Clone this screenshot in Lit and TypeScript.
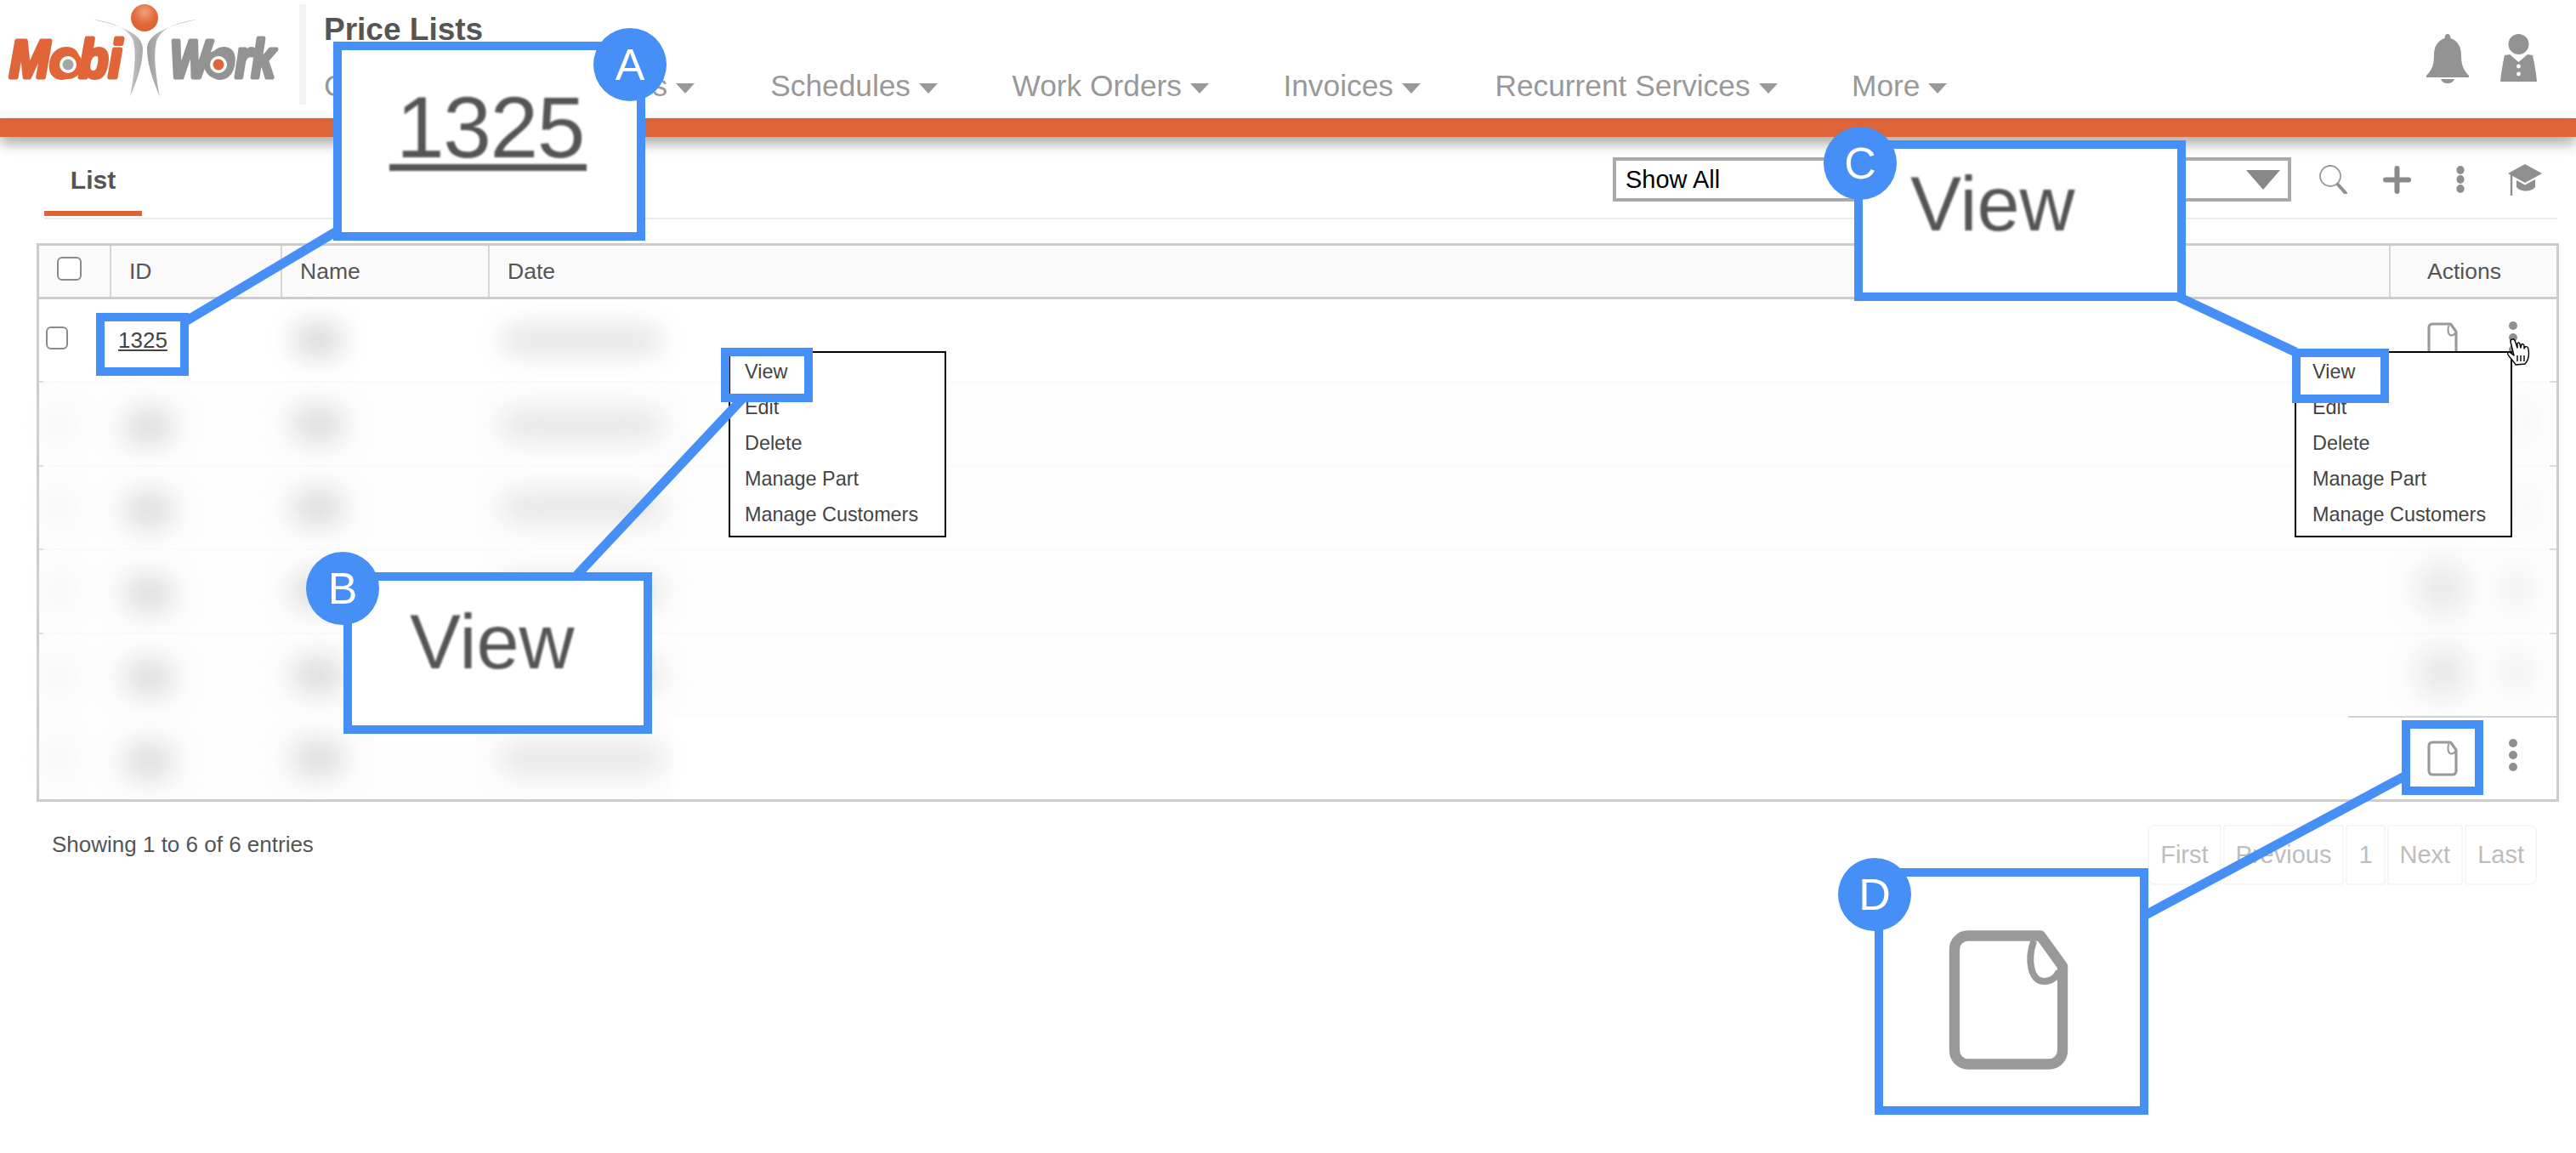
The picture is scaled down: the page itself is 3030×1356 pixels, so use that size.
import { LitElement, html, css, svg } from "lit";
import { customElement } from "lit/decorators.js";

const docIcon = svg`<path d="M6 2 H27.5 L34 11 V36 a4 4 0 0 1 -4 4 H6 a4 4 0 0 1 -4 -4 V6 a4 4 0 0 1 4 -4 Z" fill="none" stroke="#9a9899" stroke-width="3.1" stroke-linejoin="round"/><path d="M25.5 3.5 C23.5 9 24.5 15.5 28.5 15.5 C30.5 15.5 32 14.5 33 12.5" fill="none" stroke="#9a9899" stroke-width="2"/>`;

@customElement("app-root")
export class AppRoot extends LitElement {
  static styles = css`
    :host { display: block; position: relative; width: 3030px; height: 1356px; overflow: hidden; background: #fff; font-family: "Liberation Sans", Arial, sans-serif; color: #555; }
    * { box-sizing: border-box; }
    .header { display: flex; height: 139px; }
    .logo { width: 352px; height: 139px; display: block; flex: none; }
    .sep { width: 8px; height: 118px; margin-top: 5px; background: #f3f3f3; flex: none; }
    .titles { margin-left: 21px; }
    .title { font-size: 37px; font-weight: 700; line-height: 42px; margin-top: 14px; color: #555; }
    .nav { display: flex; margin-top: 25px; font-size: 35.3px; line-height: 40px; color: #999; }
    .nav-item { display: flex; align-items: center; margin-right: 87.5px; white-space: nowrap; }
    .nav-item:nth-child(1) { margin-right: 72px; }
    .nav-item:nth-child(2) { margin-right: 89px; }
    .caret { width: 0; height: 0; margin-left: 10px; margin-top: 6px; border-left: 11px solid transparent; border-right: 11px solid transparent; border-top: 12px solid #999; }
    .user { display: flex; gap: 37px; margin-left: auto; padding-right: 46px; margin-top: 40px; align-items: flex-start; }
    .bar { position: relative; height: 22px; background: #dd6437; box-shadow: 0 8px 16px rgba(0, 0, 0, 0.34); }

    .tabs { display: flex; height: 97px; margin: 0 22px 0 52px; border-bottom: 2px solid #ebebeb; }
    .tab { width: 115px; height: 93px; border-bottom: 6px solid #dd6437; text-align: center; font-size: 30px; font-weight: 700; line-height: 102px; color: #555; }
    .tools { display: flex; align-items: center; margin-left: auto; height: 52px; margin-top: 24px; padding-right: 18px; }
    .select { display: flex; align-items: center; justify-content: space-between; width: 798px; height: 52px; border: 4px solid #aaa; padding: 0 9px 0 11px; font-size: 29px; color: #000; }
    .search { margin-left: 32px; }
    .plus { margin-left: 42px; }
    .kebab { margin-left: 53px; }
    .cap { margin-left: 51px; }

    .table { margin: 28px 20px 0 43px; border: 3px solid #ccc; }
    .thead { display: grid; grid-template-columns: 83px 201px 244px 1fr 197px; height: 63px; background: #fafafa; border-bottom: 3px solid #ccc; }
    .th { display: flex; align-items: center; padding-left: 21px; font-size: 26.5px; color: #555; border-left: 2px solid #d6d6d6; }
    .th:first-child { border-left: 0; }
    .th.act { padding-left: 43px; }
    .check { width: 29px; height: 28px; border: 2.5px solid #8a8a8a; border-radius: 6px; background: #fff; display: block; }
    .th .check { margin-top: -7px; }
    .tr { position: relative; display: grid; grid-template-columns: 84px 201px 244px 1fr 197px; height: 98.4px; align-items: center; border-bottom: 2px solid #fafafa; }
    .tr.soft { background: #fdfdfd; }
    .tr.last { height: 96px; border-bottom: 0; background: linear-gradient(90deg, #fdfdfd 745px, #fff 745px); }
    .tr.cut { border-bottom-color: transparent; }
    .tr.cut::after { content: ""; position: absolute; right: 0; bottom: -2px; width: 245px; height: 2px; background: #d2d2d2; }
    .tr.soft::before { content: ""; position: absolute; left: 0; top: -2px; width: 5px; height: 2px; background: #ddd; }
    .tick { position: absolute; right: 0; bottom: -2px; width: 8px; height: 2px; background: #ddd; }
    .td { padding-left: 8px; font-size: 26px; display: flex; align-items: center; }
    .td .check { width: 26px; height: 27px; margin-top: -6px; }
    .link { color: #444; text-decoration: underline; margin-left: 1px; }
    .acts { display: flex; align-items: center; padding-left: 45px; }
    .acts .gap { margin-left: 59px; }
    .blob { height: 42px; background: #dcdcdc; border-radius: 21px; filter: blur(15px); }
    .b-chk { width: 26px; margin-left: 2px; background: #f3f3f3; }
    .b-id { width: 58px; margin-left: 8px; margin-top: 6px; }
    .b-nm { width: 62px; margin-left: 4px; }
    .b-dt { width: 190px; margin-left: 6px; height: 34px; background: #e4e4e4; }
    .b-doc { width: 60px; height: 60px; border-radius: 30px; margin-left: -12px; margin-top: -6px; background: #e8e8e8; }
    .b-dot { width: 22px; height: 50px; margin-left: 46px; margin-top: -6px; background: #ececec; }
    .b-dot.faint { background: #f5f5f5; margin-left: 104px; }

    .footer { display: flex; justify-content: space-between; margin: 27px 46px 0 61px; }
    .info { font-size: 26px; line-height: 30px; margin-top: 8px; color: #555; }
    .pager { display: flex; height: 71px; }
    .pg { display: flex; align-items: center; padding: 0 13px; margin-left: 2px; font-size: 29px; color: #bdbdbd; border: 2px solid #f6f6f6; border-radius: 3px; }
    .pg:first-child { margin-left: 0; border-radius: 8px 3px 3px 8px; }
    .pg:last-child { border-radius: 3px 8px 8px 3px; }

    .menu { position: absolute; top: 413px; width: 256px; height: 219px; background: #fff; border: 2px solid #000; padding: 1px 0 0 19px; font-size: 23.4px; color: #444; }
    .menu div { height: 42px; line-height: 42px; white-space: nowrap; }
    .m-left { left: 857px; padding-left: 17px; }
    .m-right { left: 2699px; }
    .hand { position: absolute; left: 2948px; top: 397px; }

    .lines { position: absolute; left: 0; top: 0; }
    .call { position: absolute; border: 10px solid #458ff7; }
    .big { background: #fff; color: #555; }
    .c-a { left: 392px; top: 49px; width: 367px; height: 234px; padding: 48px 0 0 56px; }
    .c-a span { display: inline-block; font-size: 102px; line-height: 86px; letter-spacing: -1.5px; padding: 0 3px 0 8px; border-bottom: 8px solid #555; filter: blur(0.8px); }
    .s-a { left: 113px; top: 368px; width: 109px; height: 74px; }
    .c-b { left: 404px; top: 673px; width: 363px; height: 190px; padding: 27px 0 0 68px; }
    .s-b { left: 848px; top: 409px; width: 108px; height: 64px; }
    .c-c { left: 2181px; top: 165px; width: 390px; height: 189px; padding: 20px 0 0 56px; }
    .s-c { left: 2696px; top: 410px; width: 114px; height: 64px; }
    .view { font-size: 90px; line-height: 90px; filter: blur(0.8px); }
    .c-d { left: 2205px; top: 1021px; width: 322px; height: 290px; padding: 59px 0 0 76px; }
    .c-d svg { display: block; filter: blur(0.7px); }
    .s-d { left: 2825px; top: 847px; width: 96px; height: 88px; }
    .pin { position: absolute; width: 86px; height: 86px; border-radius: 50%; background: #458ff7; color: #fff; display: flex; align-items: center; justify-content: center; font-size: 52px; }
    .p-a { left: 698px; top: 33px; }
    .p-b { left: 360px; top: 649px; }
    .p-c { left: 2145px; top: 149px; }
    .p-d { left: 2162px; top: 1009px; }
  `;

  private doc(w = 36, h = 42) {
    return html`<svg width=${w} height=${h} viewBox="0 0 36 42">${docIcon}</svg>`;
  }
  private dots() {
    return html`<svg width="12" height="42" viewBox="0 0 12 42"><g fill="#8f8f8f"><ellipse cx="6" cy="7" rx="5" ry="5"/><ellipse cx="6" cy="21" rx="5" ry="5"/><ellipse cx="6" cy="35" rx="5" ry="5"/></g></svg>`;
  }
  private logo() {
    return svg`<svg class="logo" viewBox="0 0 352 139">
      <defs><linearGradient id="sw" x1="0" x2="1" y1="0" y2="0"><stop offset="0" stop-color="#9c9c9c"/><stop offset=".55" stop-color="#d4d4d4"/><stop offset="1" stop-color="#a8a8a8"/></linearGradient>
      <radialGradient id="ball" cx=".5" cy=".3" r=".7"><stop offset="0" stop-color="#f0a27e"/><stop offset=".6" stop-color="#e2693a"/><stop offset="1" stop-color="#d9602f"/></radialGradient></defs>
      <path d="M110 23 C130 26 148 31 156 46 C160 58 160 75 153 114 C161 95 168 75 168 58 C168 44 155 33 110 23 Z" fill="url(#sw)"/>
      <path d="M231 23 C211 26 193 31 185 46 C181 58 181 75 188 114 C180 95 173 75 173 58 C173 44 186 33 231 23 Z" fill="url(#sw)"/>
      <circle cx="170" cy="21" r="16" fill="url(#ball)"/>
      <g font-family="Liberation Sans" font-weight="700" font-style="italic" font-size="63" stroke-width="5" stroke-linejoin="round">
        <text transform="translate(11 90.5) scale(.9 1)" fill="#e0663a" stroke="#e0663a">Mobi</text>
        <text transform="translate(200 90.5) scale(.79 1)" fill="#939393" stroke="#939393">Work</text>
      </g>
      <circle cx="80" cy="76" r="17" fill="#e0663a"/><circle cx="80" cy="76" r="10" fill="#fff"/><circle cx="80" cy="76" r="6.5" fill="#a5a5a5"/>
      <circle cx="257" cy="76" r="17" fill="#939393"/><circle cx="257" cy="76" r="10" fill="#fff"/><circle cx="257" cy="76" r="6.5" fill="#e0663a"/>
    </svg>`;
  }
  private hand() {
    return html`<svg class="hand" width="28" height="33" viewBox="0 0 28 33"><path d="M7 2 C9 1 10 3 11 6 L13 12 L13 7 C14 5 16 6 16 8 L17 12 L18 8 C19 7 21 8 21 10 L21 13 L22 11 C24 10 26 11 26 14 C27 20 26 27 22 31 L11 32 C9 28 4 24 2 20 C1 17 3 16 5 18 L9 21 L5 5 C5 3 6 2 7 2 Z" fill="#fff" stroke="#000" stroke-width="1.4" stroke-linejoin="round"/><path d="M13 21 V28 M17 21 V28 M21 21 V28" stroke="#000" stroke-width="1.4"/></svg>`;
  }
  private blurRow(cls: string, dot = "") {
    return html`<div class="tr ${cls}">
      <div class="td"><div class="blob b-chk"></div></div>
      <div class="td"><div class="blob b-id"></div></div>
      <div class="td"><div class="blob b-nm"></div></div>
      <div class="td"><div class="blob b-dt"></div></div>
      <div class="td acts">${dot === "full" ? html`<div class="blob b-doc"></div><div class="blob b-dot"></div>` : html`<div class="blob b-dot faint"></div>`}</div>
      <span class="tick"></span>
    </div>`;
  }

  render() {
    const navs = ["Customers", "Vendors", "Schedules", "Work Orders", "Invoices", "Recurrent Services", "More"];
    const items = ["View", "Edit", "Delete", "Manage Part", "Manage Customers"];
    const menu = html`${items.map((i) => html`<div>${i}</div>`)}`;
    return html`
      <header class="header">
        ${this.logo()}
        <div class="sep"></div>
        <div class="titles">
          <div class="title">Price Lists</div>
          <nav class="nav">${navs.map((n) => html`<div class="nav-item">${n}<span class="caret"></span></div>`)}</nav>
        </div>
        <div class="user">
          <svg width="50" height="58" viewBox="0 0 50 58"><path d="M25 0 C27.5 0 28.5 2 28.5 5 C37 8 41 15 41 25 C41 35 43 42 50 49 L50 51 L0 51 L0 49 C7 42 9 35 9 25 C9 15 13 8 21.5 5 C21.5 2 22.5 0 25 0 Z" fill="#949394"/><path d="M17 53 H33 C32 56 29 58 25 58 C21 58 18 56 17 53 Z" fill="#949394"/></svg>
          <svg width="43" height="56" viewBox="0 0 43 56"><circle cx="21.5" cy="12" r="12" fill="#949394"/><path d="M11 24 L21.5 33 L32 24 L38 25 C40 34 42 45 43 56 L0 56 C1 45 3 34 5 25 Z" fill="#949394"/><circle cx="21.5" cy="38" r="2.4" fill="#fff"/><circle cx="21.5" cy="47" r="2.4" fill="#fff"/></svg>
        </div>
      </header>
      <div class="bar"></div>
      <section class="tabs">
        <div class="tab">List</div>
        <div class="tools">
          <div class="select"><span>Show All</span><svg width="40" height="23" viewBox="0 0 40 23"><path d="M0 0 H40 L20 23 Z" fill="#888"/></svg></div>
          <svg class="search" width="34" height="34" viewBox="0 0 34 34"><circle cx="14" cy="13" r="12" fill="none" stroke="#999" stroke-width="1.8"/><path d="M23 23 L32 33" stroke="#8f8f8f" stroke-width="4" stroke-linecap="round"/></svg>
          <svg class="plus" width="33" height="33" viewBox="0 0 33 33"><path d="M16.5 3 V30 M3 16.5 H30" stroke="#8a8a8a" stroke-width="6" stroke-linecap="round"/></svg>
          <svg class="kebab" width="10" height="34" viewBox="0 0 10 34"><g fill="#8f8f8f"><ellipse cx="5" cy="6" rx="4.6" ry="5"/><ellipse cx="5" cy="17" rx="4.6" ry="5"/><ellipse cx="5" cy="28" rx="4.6" ry="5"/></g></svg>
          <svg class="cap" width="40" height="37" viewBox="0 0 40 37"><path d="M20 0 L40 11 L20 22 L0 11 Z" fill="#8f8f8f"/><path d="M10 19 L20 24.5 L32 18 V27 C28 33 14 33 10 27 Z" fill="#8f8f8f"/><path d="M4 12 V37" stroke="#8f8f8f" stroke-width="2.4"/></svg>
        </div>
      </section>

      <section class="table">
        <div class="thead">
          <div class="th"><span class="check"></span></div>
          <div class="th">ID</div>
          <div class="th">Name</div>
          <div class="th">Date</div>
          <div class="th act">Actions</div>
        </div>
        <div class="tr">
          <div class="td"><span class="check"></span></div>
          <div class="td"><span class="link">1325</span></div>
          <div class="td"><div class="blob b-nm"></div></div>
          <div class="td"><div class="blob b-dt"></div></div>
          <div class="td acts">${this.doc()}<span class="gap">${this.dots()}</span></div>
          <span class="tick"></span>
        </div>
        ${this.blurRow("soft", "faint")}
        ${this.blurRow("soft", "faint")}
        ${this.blurRow("soft", "full")}
        ${this.blurRow("soft cut", "full")}
        <div class="tr last">
          <div class="td"><div class="blob b-chk"></div></div>
          <div class="td"><div class="blob b-id"></div></div>
          <div class="td"><div class="blob b-nm"></div></div>
          <div class="td"><div class="blob b-dt"></div></div>
          <div class="td acts">${this.doc()}<span class="gap">${this.dots()}</span></div>
        </div>
      </section>

      <footer class="footer">
        <div class="info">Showing 1 to 6 of 6 entries</div>
        <div class="pager">${["First", "Previous", "1", "Next", "Last"].map((p) => html`<div class="pg">${p}</div>`)}</div>
      </footer>

      <div class="menu m-left">${menu}</div>
      <div class="menu m-right">${menu}</div>
      ${this.hand()}

      <svg class="lines" width="3030" height="1356" viewBox="0 0 3030 1356">
        <g stroke="#458ff7" stroke-width="11" fill="none">
          <path d="M396 272 L218 378"/>
          <path d="M874 468 L677 678"/>
          <path d="M2562 349 L2700 414"/>
          <path d="M2830 912 L2522 1077"/>
        </g>
      </svg>

      <div class="call big c-a"><span>1325</span></div>
      <div class="call s-a"></div>
      <div class="call big c-b"><div class="view">View</div></div>
      <div class="call s-b"></div>
      <div class="call big c-c"><div class="view">View</div></div>
      <div class="call s-c"></div>
      <div class="call big c-d"><svg width="143" height="172" viewBox="0 0 36 42">${docIcon}</svg></div>
      <div class="call s-d"></div>
      <div class="pin p-a">A</div>
      <div class="pin p-b">B</div>
      <div class="pin p-c">C</div>
      <div class="pin p-d">D</div>
    `;
  }
}
